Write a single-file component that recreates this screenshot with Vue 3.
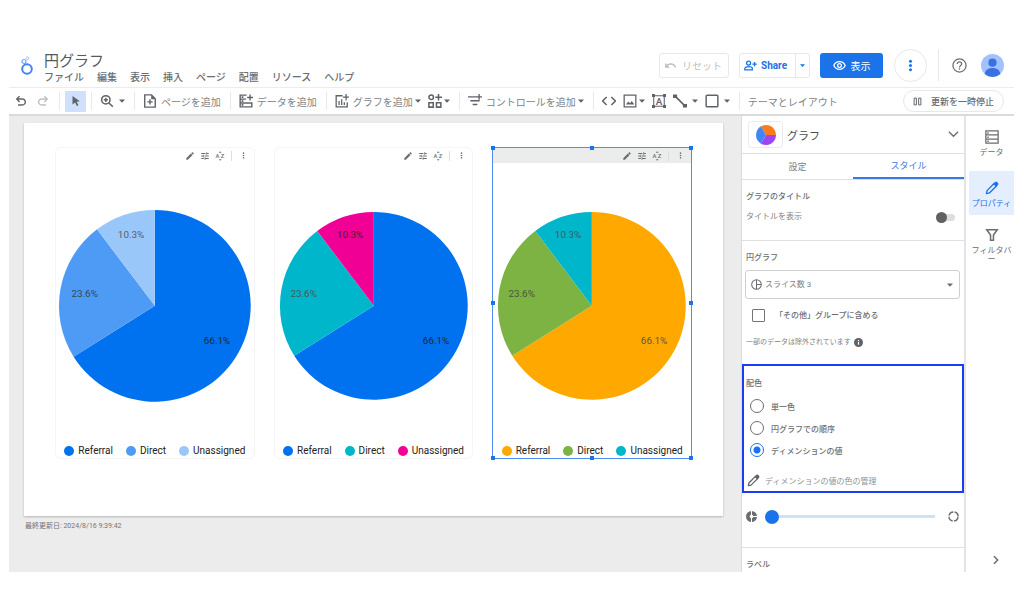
<script setup>
import { h, ref } from 'vue'

const glyphs = {
  undo: '<path d="M7 20v-2.400h7.100q1.700 0 2.900-1.100t1.200-2.800-1.200-2.800-2.900-1.100H7.600l2.900 2.900L8.800 14.400 3 8.600 8.800 2.800l1.700 1.700L7.600 7.400h6.500q2.700 0 4.600 1.800t1.900 4.500-1.900 4.500T14.100 20z"/>',
  redo: '<path transform="matrix(-1 0 0 1 24 0)" d="M7 20v-2.400h7.100q1.700 0 2.900-1.100t1.200-2.800-1.200-2.800-2.900-1.100H7.600l2.900 2.900L8.800 14.400 3 8.600 8.800 2.800l1.700 1.700L7.600 7.400h6.500q2.700 0 4.600 1.800t1.900 4.500-1.900 4.500T14.100 20z"/>',
  reset: '<path d="M12.500 8c-2.650 0-5.050.99-6.900 2.600L2 7v9h9l-3.620-3.620c1.390-1.160 3.160-1.880 5.120-1.880 3.540 0 6.550 2.310 7.600 5.500l2.370-.78C21.080 11.030 17.150 8 12.500 8z"/>',
  cursor: '<path d="M5 2l14.500 10.500-6.200.8 3.600 7-3.200 1.500-3.400-7L5 18.800z"/>',
  zoom: '<g fill="none" stroke="currentColor" stroke-width="2.600"><circle cx="10" cy="10" r="7.200"/><path d="M15.300 15.300l6.700 6.700M10 6.500v7M6.500 10h7"/></g>',
  page: '<path fill="none" stroke="currentColor" stroke-width="2.400" d="M14.500 1.500H3v21h18V8zM12 9v9M7.500 13.500h9"/><path d="M14 1v8h7z"/>',
  data: '<path fill="none" stroke="currentColor" stroke-width="2.400" d="M13 2H2v20h20v-8M2 8.700h10M2 15.300h20M19 1v10M14 6h10"/><path d="M4.500 4h3v3h-3zM4.500 10.500h3v3h-3zM4.500 17.200h3v3h-3z"/>',
  chart: '<path fill="none" stroke="currentColor" stroke-width="2.200" d="M13 3H2v19h19v-8M19 0v11M13.500 5.500h10.500M7 12v7M11.500 9v10M16 14v5"/>',
  widgets: '<g fill="none" stroke="currentColor" stroke-width="2.600"><circle cx="5.500" cy="5.500" r="3.900"/><path d="M18 0v11M12.500 5.500h11.500M1.500 15h7.500v7.500h-7.500zM14.500 15H22v7.500h-7.500z"/></g>',
  filterAdd: '<path fill="none" stroke="currentColor" stroke-width="2.400" d="M0 5h14M4 11.500h16M8 18h8M19 0v10M14 5h10"/>',
  code: '<path fill="none" stroke="currentColor" stroke-width="2.600" d="M8 5l-7 7 7 7M16 5l7 7-7 7"/>',
  image: '<path fill="none" stroke="currentColor" stroke-width="2.200" d="M2 2h20v20H2z"/><path d="M5 18l4-5 3 3 3-4 4.500 6z"/>',
  textBox: '<path fill="none" stroke="currentColor" stroke-width="1.800" d="M3 3h18v18H3z"/><path d="M0 0h5v5H0zM19 0h5v5h-5zM0 19h5v5H0zM19 19h5v5h-5z"/><text x="12" y="18" text-anchor="middle" font-family="Roboto, sans-serif" font-weight="500" font-size="17">A</text>',
  line: '<path fill="none" stroke="currentColor" stroke-width="2.800" d="M4 4l16 16"/><path d="M0 1h7v6H0zM17 17h7v6h-7z"/>',
  rect: '<rect x="2" y="2" width="20" height="20" rx="1.500" fill="none" stroke="currentColor" stroke-width="2.500"/>',
  caret: '<path d="M0 6h24L12 19z"/>',
  pause: '<path fill="none" stroke="currentColor" stroke-width="2.600" d="M3 3h6v18H3zM15 3h6v18h-6z"/>',
  share: '<g fill="none" stroke="currentColor" stroke-width="2.400"><circle cx="8.500" cy="7.500" r="3.700"/><path d="M1.500 20v-2.200c0-2.400 4-3.800 7-3.800s7 1.400 7 3.800V20zM19.500 5.500v8M15.500 9.500h8"/></g>',
  eye: '<path fill="none" stroke="currentColor" stroke-width="2.300" d="M1.500 12C3.500 7.500 7.500 5 12 5s8.500 2.500 10.500 7c-2 4.500-6 7-10.500 7S3.500 16.500 1.500 12z"/><circle cx="12" cy="12" r="3.500" fill="none" stroke="currentColor" stroke-width="2.300"/>',
  dots: '<circle cx="12" cy="4" r="2.800"/><circle cx="12" cy="12" r="2.800"/><circle cx="12" cy="20" r="2.800"/>',
  help: '<circle cx="12" cy="12" r="10.500" fill="none" stroke="currentColor" stroke-width="2"/><path fill="none" stroke="currentColor" stroke-width="2" d="M8.500 9.500c0-4.500 7-4.500 7 0 0 2.500-3.500 2.600-3.500 5.500"/><path d="M11 16.500h2v2.200h-2z"/>',
  pencil: '<path d="M3 17.250V21h3.750L17.810 9.940l-3.750-3.750L3 17.250zM20.710 7.040a1 1 0 0 0 0-1.410l-2.340-2.340a1 1 0 0 0-1.410 0l-1.830 1.830 3.750 3.750z"/>',
  pencilLine: '<path fill="none" stroke="currentColor" stroke-width="2.300" stroke-linejoin="round" d="M2.500 21.500l1-5L16 4l4 4L7.500 20.500z"/><path d="M14 5l3.500-3.500q1.500-1 3 0l2 2q1 1.500 0 3L19 10z"/>',
  tune: '<path d="M3 17v2h6v-2H3zM3 5v2h10V5H3zm10 16v-2h8v-2h-8v-2h-2v6h2zM7 9v2H3v2h4v2h2V9H7zm14 4v-2H11v2h10zm-6-4h2V7h4V5h-4V3h-2v6z"/>',
  sort: '<g font-family="Roboto, sans-serif" font-weight="500" font-size="14"><text x="1" y="17">A</text><text x="14" y="17">Z</text></g><path d="M9 4l3.500-3.500L16 4zM9 20l3.500 3.500L16 20z"/>',
  chevronDown: '<path fill="none" stroke="currentColor" stroke-width="3" d="M2 6l10 10L22 6"/>',
  chevronRight: '<path fill="none" stroke="currentColor" stroke-width="3.600" d="M7 3l9 9-9 9"/>',
  pieSmall: '<g fill="none" stroke="currentColor" stroke-width="2.200"><circle cx="12" cy="12" r="10.500"/><path d="M12 1.500v21M12 12h10.500"/></g>',
  info: '<circle cx="12" cy="12" r="12"/><path fill="#fff" d="M10.500 10.500h3V18h-3zM10.500 5.500h3v3h-3z"/>',
  donutThick: '<circle cx="12" cy="12" r="8" fill="none" stroke="currentColor" stroke-width="8"/><path stroke="#fff" stroke-width="2.200" d="M12 0v24M12 12h12"/>',
  donutThin: '<circle cx="12" cy="12" r="10" fill="none" stroke="currentColor" stroke-width="3.200" stroke-dasharray="12.700 3" stroke-dashoffset="-1.500"/>',
  table: '<path fill="none" stroke="currentColor" stroke-width="2.200" d="M1.500 1.500h21v21h-21zM1.500 8.500h21M1.500 15.500h21"/><path d="M4 4h2.500v2.500H4zM4 11h2.500v2.500H4zM4 18h2.500v2.500H4z"/>',
  funnel: '<path fill="none" stroke="currentColor" stroke-width="2.600" d="M3 3h18l-6.500 9v9h-5v-9z"/>'
}

const Icon = ({ name, size }) =>
  h('svg', {
    viewBox: '0 0 24 24',
    width: size,
    height: size,
    fill: 'currentColor',
    'aria-hidden': 'true',
    innerHTML: glyphs[name]
  })
Icon.props = ['name', 'size']

const menus = ['ファイル', '編集', '表示', '挿入', 'ページ', '配置', 'リソース', 'ヘルプ']

const series = [
  { name: 'Referral', share: 66.1, x: 63, y: 39 },
  { name: 'Direct', share: 23.6, x: -71, y: -9 },
  { name: 'Unassigned', share: 10.3, x: -24, y: -69 }
]

function slices(radius, colors, inks) {
  let total = 0
  return series.map((s, i) => {
    const from = (total / 100) * 2 * Math.PI
    total += s.share
    const to = (total / 100) * 2 * Math.PI
    const point = (a) => `${radius * Math.sin(a)} ${-radius * Math.cos(a)}`
    const large = s.share > 50 ? 1 : 0
    return {
      ...s,
      color: colors[i],
      ink: inks[i],
      d: `M0 0L${point(from)}A${radius} ${radius} 0 ${large} 1 ${point(to)}Z`
    }
  })
}

const charts = [
  { id: 'single', parts: slices(97, ['#0072f0', '#4d9bf5', '#99c7f9'], ['#20262e', '#33475c', '#56616e']) },
  { id: 'order', parts: slices(95, ['#0072f0', '#00b6cb', '#f10096'], ['#20262e', '#48595c', '#40202f']) },
  { id: 'value', selected: true, parts: slices(95, ['#ffa800', '#7cb342', '#00b6cb'], ['#5f5747', '#4a5640', '#40595c']) }
]
const handles = ['nw', 'n', 'ne', 'w', 'e', 'sw', 's', 'se']

const colorModes = ['単一色', '円グラフでの順序', 'ディメンションの値']
const colorMode = ref('ディメンションの値')
const showTitle = ref(false)
const groupOthers = ref(false)
const hole = ref(0)
</script>

<template>
  <div class="app">
    <header class="top">
      <svg class="logo" viewBox="0 0 14 20" width="14" height="20" fill="none" aria-hidden="true">
        <circle cx="7" cy="13" r="4.800" stroke="#4285f4" stroke-width="2" />
        <circle cx="4" cy="5.500" r="2" stroke="#6ba3f8" stroke-width="1.200" />
        <circle cx="7.500" cy="2.200" r="1.400" stroke="#a8c8fb" stroke-width="1" />
      </svg>
      <div class="heading">
        <h1>円グラフ</h1>
        <nav class="menus">
          <button v-for="m in menus" :key="m" type="button">{{ m }}</button>
        </nav>
      </div>
      <div class="actions">
        <button class="box reset" type="button" disabled><Icon name="reset" :size="13" />リセット</button>
        <div class="box split">
          <button class="share" type="button"><Icon name="share" :size="13" />Share</button>
          <button class="share-more" type="button" aria-label="共有オプション"><Icon name="caret" :size="5" /></button>
        </div>
        <button class="view" type="button"><Icon name="eye" :size="13" />表示</button>
        <button class="round" type="button" aria-label="その他"><Icon name="dots" :size="13" /></button>
        <span class="rule"></span>
        <button class="help" type="button" aria-label="ヘルプ"><Icon name="help" :size="15" /></button>
        <button class="avatar" type="button" aria-label="アカウント">
          <svg viewBox="0 0 24 24" width="23" height="23" aria-hidden="true">
            <circle cx="12" cy="12" r="12" fill="#a0c3ff" />
            <circle cx="12" cy="9" r="4.300" fill="#3c70e0" />
            <path d="M4 20.900C4 12.500 20 12.500 20 20.900A12 12 0 0 1 4 20.900z" fill="#3c70e0" />
          </svg>
        </button>
      </div>
    </header>

    <div class="toolbar">
      <div class="group history">
        <button type="button" aria-label="元に戻す"><Icon name="undo" :size="14" /></button>
        <button class="off" type="button" aria-label="やり直す" disabled><Icon name="redo" :size="14" /></button>
      </div>
      <div class="group pick">
        <button class="active" type="button" aria-label="選択"><Icon name="cursor" :size="12" /></button>
      </div>
      <div class="group">
        <button type="button" aria-label="ズーム"><Icon name="zoom" :size="14" /><Icon class="caret wide" name="caret" :size="6" /></button>
      </div>
      <div class="group">
        <button type="button"><Icon name="page" :size="14" />ページを追加</button>
      </div>
      <div class="group">
        <button type="button"><Icon name="data" :size="14" />データを追加</button>
      </div>
      <div class="group">
        <button type="button"><Icon name="chart" :size="14" />グラフを追加<Icon class="caret" name="caret" :size="6" /></button>
        <button type="button" aria-label="ビジュアリゼーション"><Icon name="widgets" :size="14" /><Icon class="caret" name="caret" :size="6" /></button>
      </div>
      <div class="group">
        <button type="button"><Icon name="filterAdd" :size="14" />コントロールを追加<Icon class="caret" name="caret" :size="6" /></button>
      </div>
      <div class="group">
        <button type="button" aria-label="埋め込み"><Icon name="code" :size="14" /></button>
        <button type="button" aria-label="画像"><Icon name="image" :size="14" /><Icon class="caret" name="caret" :size="6" /></button>
        <button type="button" aria-label="テキスト"><Icon name="textBox" :size="14" /></button>
        <button type="button" aria-label="線"><Icon name="line" :size="14" /><Icon class="caret wide" name="caret" :size="6" /></button>
        <button type="button" aria-label="図形"><Icon name="rect" :size="14" /><Icon class="caret wide" name="caret" :size="6" /></button>
      </div>
      <div class="group">
        <button type="button">テーマとレイアウト</button>
      </div>
      <button class="pause" type="button"><Icon name="pause" :size="9" />更新を一時停止</button>
    </div>

    <div class="body">
      <main class="stage">
        <div class="sheet">
          <section v-for="c in charts" :key="c.id" class="card" :class="{ selected: c.selected }">
            <div class="card-bar">
              <button type="button" aria-label="編集"><Icon name="pencil" :size="10" /></button>
              <button type="button" aria-label="調整"><Icon name="tune" :size="10" /></button>
              <button type="button" aria-label="並べ替え"><Icon name="sort" :size="10" /></button>
              <span class="card-rule"></span>
              <button type="button" aria-label="メニュー"><Icon name="dots" :size="7" /></button>
            </div>
            <svg class="pie" viewBox="-100 -100 200 200">
              <path v-for="p in c.parts" :key="p.name" :d="p.d" :fill="p.color" />
              <text v-for="p in c.parts" :key="p.name" :x="p.x" :y="p.y" :fill="p.ink">{{ p.share }}%</text>
            </svg>
            <ul class="legend">
              <li v-for="p in c.parts" :key="p.name">
                <span class="dot" :style="{ background: p.color }"></span>{{ p.name }}
              </li>
            </ul>
            <template v-if="c.selected">
              <span v-for="k in handles" :key="k" class="handle" :class="k"></span>
            </template>
          </section>
        </div>
        <p class="updated">最終更新日: 2024/8/16 9:39:42</p>
      </main>

      <aside class="panel">
        <div class="panel-head">
          <span class="chip">
            <svg viewBox="-10 -10 20 20" width="20" height="20" aria-hidden="true">
              <path d="M0 0L-5 -8.660A10 10 0 0 1 10 0Z" fill="#fa7b17" />
              <path d="M0 0L10 0A10 10 0 0 1 -5 8.660Z" fill="#a142f4" />
              <path d="M0 0L-5 8.660A10 10 0 0 1 -5 -8.660Z" fill="#4285f4" />
            </svg>
          </span>
          <h2>グラフ</h2>
          <button type="button" aria-label="グラフの種類を開く"><Icon name="chevronDown" :size="11" /></button>
        </div>
        <div class="tabs" role="tablist">
          <button type="button" role="tab" aria-selected="false">設定</button>
          <button class="on" type="button" role="tab" aria-selected="true">スタイル</button>
        </div>

        <section class="part title-part">
          <h3>グラフのタイトル</h3>
          <label class="switch-row">
            タイトルを表示
            <input v-model="showTitle" class="switch" type="checkbox" />
          </label>
        </section>

        <section class="part">
          <h3>円グラフ</h3>
          <div class="picker">
            <Icon name="pieSmall" :size="11" />
            <select aria-label="スライス数">
              <option>スライス数 3</option>
            </select>
            <Icon name="caret" :size="6" />
          </div>
          <label class="check-row">
            <input v-model="groupOthers" type="checkbox" />
            「その他」グループに含める
          </label>
          <p class="note">一部のデータは除外されています<Icon name="info" :size="9" /></p>
        </section>

        <section class="color-part">
          <h3>配色</h3>
          <label v-for="m in colorModes" :key="m" class="radio-row">
            <input v-model="colorMode" type="radio" name="color-mode" :value="m" />{{ m }}
          </label>
          <button class="manage" type="button"><Icon name="pencilLine" :size="13" />ディメンションの値の色の管理</button>
        </section>

        <section class="hole-part">
          <Icon name="donutThick" :size="11" />
          <input v-model="hole" type="range" min="0" max="100" aria-label="穴の大きさ" />
          <Icon name="donutThin" :size="11" />
        </section>

        <section class="label-part">
          <h3>ラベル</h3>
        </section>
      </aside>

      <nav class="rail">
        <button class="first" type="button"><Icon name="table" :size="14" /><span>データ</span></button>
        <button class="on" type="button"><Icon name="pencilLine" :size="14" /><span>プロパティ</span></button>
        <button type="button"><Icon name="funnel" :size="14" /><span>フィルタバー</span></button>
        <button class="collapse" type="button" aria-label="折りたたむ"><Icon name="chevronRight" :size="10" /></button>
      </nav>
    </div>
  </div>
</template>

<style>
body {
  background: #fff;
}
</style>

<style scoped>
* {
  box-sizing: border-box;
}
.app {
  display: flex;
  flex-direction: column;
  min-height: 100vh;
  padding: 48px 10px 42px 9px;
  font-family: Roboto, "Noto Sans CJK JP", sans-serif;
  font-size: 10px;
  color: #6a6d71;
}
button {
  display: flex;
  align-items: center;
  padding: 0;
  border: 0;
  background: none;
  font: inherit;
  color: inherit;
  white-space: nowrap;
}
svg {
  display: block;
  flex: none;
}
h1,
h2,
h3,
p,
ul {
  margin: 0;
  padding: 0;
  font-weight: 400;
}

.top {
  display: flex;
  align-items: flex-start;
  height: 40px;
  border-bottom: 1px solid #ececec;
}
.logo {
  margin: 8px 10px 0 11px;
}
.heading {
  padding-top: 4px;
}
h1 {
  font-size: 15px;
  line-height: 19px;
  color: #55585c;
}
.menus {
  display: flex;
  gap: 13px;
  line-height: 14px;
  font-weight: 500;
}
.actions {
  display: flex;
  align-items: center;
  height: 34px;
  margin-left: auto;
}
.box {
  height: 25px;
  border: 1px solid #e6e8ea;
  border-radius: 3px;
}
.reset {
  gap: 5px;
  width: 70px;
  padding-left: 4px;
  margin-right: 10px;
  color: #bdbfc2;
}
.split {
  display: flex;
  width: 71px;
  margin-right: 10px;
  color: #1a73e8;
}
.share {
  flex: 1;
  gap: 4px;
  padding-left: 4px;
  font-weight: 700;
}
.share-more {
  width: 14px;
  justify-content: center;
  border-left: 1px solid #e6e8ea;
}
.view {
  justify-content: center;
  gap: 5px;
  width: 63px;
  height: 25px;
  margin-right: 11px;
  border-radius: 3px;
  background: #1a73e8;
  color: #fff;
}
.round {
  justify-content: center;
  width: 33px;
  height: 33px;
  margin-right: 11px;
  border: 1px solid #e6e8ea;
  border-radius: 50%;
  color: #1a73e8;
}
.rule {
  width: 1px;
  height: 32px;
  margin-right: 13px;
  background: #e6e8ea;
}
.help {
  margin-right: 14px;
}
.avatar {
  margin-right: 10px;
}

.toolbar {
  display: flex;
  align-items: center;
  height: 28px;
  border-bottom: 2px solid #dadada;
  color: #808286;
}
.toolbar svg {
  color: #5f6368;
}
.group {
  display: flex;
  align-items: center;
  gap: 7px;
  height: 18px;
  padding: 0 9px 0 8px;
  border-left: 1px solid #e9e9e9;
}
.group button {
  gap: 4px;
}
.group .caret {
  margin-left: -2px;
}
.group .caret.wide {
  margin-left: 1px;
}
.group.history {
  gap: 8px;
  padding: 0 9px 0 5px;
  border-left: 0;
}
.off {
  opacity: 0.4;
}
.group.pick {
  padding: 0 5px;
}
.group .active {
  justify-content: center;
  width: 21px;
  height: 21px;
  background: #cfe0fc;
}
.pause {
  gap: 9px;
  height: 22px;
  margin-left: auto;
  margin-right: 10px;
  padding: 0 9px;
  border: 1px solid #e6e8ea;
  border-radius: 11px;
  font-size: 9px;
  font-weight: 500;
  color: #6a6d71;
}

.body {
  display: flex;
  flex: 1;
}
.stage {
  flex: 1;
  min-width: 0;
  padding: 7px 18px 0 15px;
  background: #ececec;
}
.sheet {
  display: flex;
  gap: 19px;
  padding: 24px 31px 57px;
  background: #fff;
  box-shadow: 0 1px 2px #b4b4b4;
}
.card {
  position: relative;
  flex: 1;
  min-width: 0;
  border: 1px solid #f5f5f5;
  border-radius: 6px;
}
.card.selected {
  border-color: #4f8ef0;
  border-radius: 0;
}
.card-bar {
  display: flex;
  align-items: center;
  justify-content: flex-end;
  gap: 5px;
  height: 15px;
  padding-right: 7px;
}
.selected .card-bar {
  background: #ececec;
}
.card-rule {
  width: 1px;
  height: 10px;
  margin: 0 3px 0 1px;
  background: #dedede;
}
.pie {
  width: 100%;
  margin: 44px 0 40px;
}
.pie text {
  font-size: 10px;
  text-anchor: middle;
}
.legend {
  display: flex;
  justify-content: center;
  gap: 13px;
  padding-bottom: 1px;
  list-style: none;
  line-height: 12px;
  color: #212121;
}
.legend li {
  display: flex;
  align-items: center;
  gap: 4px;
}
.dot {
  width: 10px;
  height: 10px;
  border-radius: 50%;
}
.handle {
  position: absolute;
  width: 4px;
  height: 4px;
  margin: -2px;
  background: #1a73e8;
}
.nw, .n, .ne { top: 0; }
.w, .e { top: 50%; }
.sw, .s, .se { top: 100%; }
.nw, .w, .sw { left: 0; }
.n, .s { left: 50%; }
.ne, .e, .se { left: 100%; }
.updated {
  padding: 5px 1px;
  font-size: 7px;
  line-height: 10px;
  color: #757575;
}

.panel {
  width: 225px;
  border-left: 1px solid #dcdcdc;
  border-right: 2px solid #e4e4e4;
  font-size: 8px;
}
.panel h3 {
  font-size: 8px;
  line-height: 12px;
  font-weight: 500;
}
.panel-head {
  display: flex;
  align-items: center;
  height: 38px;
  padding: 0 5px 0 6px;
  border-bottom: 1px solid #e0e0e0;
}
.chip {
  display: flex;
  align-items: center;
  justify-content: center;
  width: 35px;
  height: 27px;
  border: 1px solid #ececec;
  border-radius: 3px;
}
h2 {
  margin-left: 4px;
  font-size: 11px;
  color: #4a4d51;
}
.panel-head button {
  margin-left: auto;
}
.tabs {
  display: flex;
  height: 26px;
  border-bottom: 1px solid #e0e0e0;
  font-size: 9px;
}
.tabs button {
  flex: 1;
  justify-content: center;
  color: #808286;
}
.tabs .on {
  border-bottom: 2px solid #3b78e7;
  color: #3b78e7;
}
.part {
  padding: 11px 4px 0;
}
.title-part {
  height: 61px;
  border-bottom: 1px solid #e0e0e0;
}
.switch-row {
  display: flex;
  align-items: center;
  justify-content: space-between;
  margin-top: 8px;
  padding-right: 5px;
  line-height: 12px;
  color: #808285;
}
.switch {
  appearance: none;
  display: flex;
  align-items: center;
  width: 18px;
  height: 7px;
  margin: 0;
  border-radius: 4px;
  background: #dedede;
}
.switch::before {
  content: "";
  width: 11px;
  height: 11px;
  margin-left: -1px;
  border-radius: 50%;
  background: #616161;
}
.switch:checked {
  justify-content: flex-end;
}
.picker {
  display: flex;
  align-items: center;
  gap: 3px;
  height: 29px;
  margin: 6px 0 10px -1px;
  padding: 0 6px 0 5px;
  border: 1px solid #cfcfcf;
  border-radius: 3px;
}
.picker select {
  appearance: none;
  flex: 1;
  padding: 0;
  border: 0;
  background: none;
  font: inherit;
  color: #808286;
}
.check-row {
  display: flex;
  align-items: center;
  gap: 10px;
  padding-left: 6px;
  line-height: 13px;
  font-weight: 500;
}
.check-row input {
  appearance: none;
  width: 13px;
  height: 13px;
  margin: 0;
  border: 1px solid #757575;
  border-radius: 1px;
}
.check-row input:checked {
  background: #1a73e8;
}
.note {
  display: flex;
  align-items: center;
  gap: 3px;
  margin-top: 14px;
  font-size: 7px;
  line-height: 12px;
  color: #808285;
}
.note svg {
  color: #5f6368;
}
.color-part {
  margin-top: 16px;
  padding: 12px 2px 3px;
  border: 2px solid #1c3df0;
}
.color-part h3 {
  margin-bottom: 5px;
}
.radio-row {
  display: flex;
  align-items: center;
  gap: 7px;
  height: 22px;
  padding-left: 4px;
  font-weight: 500;
}
.radio-row input {
  appearance: none;
  width: 14px;
  height: 14px;
  margin: 0;
  border: 1px solid #6b6e72;
  border-radius: 50%;
}
.radio-row input:checked {
  border-color: #1a73e8;
  background: radial-gradient(#1a73e8 3px, #fff 4px);
}
.manage {
  gap: 5px;
  margin-top: 12px;
  height: 15px;
  padding-left: 1px;
  color: #909295;
}
.manage svg {
  color: #5f6368;
}
.hole-part {
  display: flex;
  align-items: center;
  height: 55px;
  padding: 0 5px 7px 4px;
  border-bottom: 1px solid #e0e0e0;
}
.hole-part input {
  appearance: none;
  flex: 1;
  min-width: 0;
  height: 14px;
  margin: 0 13px 0 8px;
  background: linear-gradient(#cfe0fb, #cfe0fb) center / 100% 3px no-repeat;
}
.hole-part input::-webkit-slider-thumb {
  appearance: none;
  width: 14px;
  height: 14px;
  border-radius: 50%;
  background: #1a73e8;
}
.label-part {
  padding: 11px 4px 0;
}

.rail {
  display: flex;
  flex-direction: column;
  width: 48px;
  padding: 4px 0 4px 3px;
  font-size: 8px;
}
.rail button {
  flex-direction: column;
  gap: 4px;
  min-height: 44px;
  padding-top: 10px;
  margin-bottom: 3px;
  white-space: normal;
  text-align: center;
}
.rail .first {
  margin-bottom: 7px;
}
.rail button span {
  width: 42px;
  line-height: 9px;
  word-break: break-all;
}
.rail .on {
  background: #e4eefd;
  color: #1a73e8;
  border-radius: 2px 0 0 2px;
}
.rail .collapse {
  justify-content: center;
  min-height: 16px;
  margin: auto 0 0 8px;
  padding: 0;
}
</style>
